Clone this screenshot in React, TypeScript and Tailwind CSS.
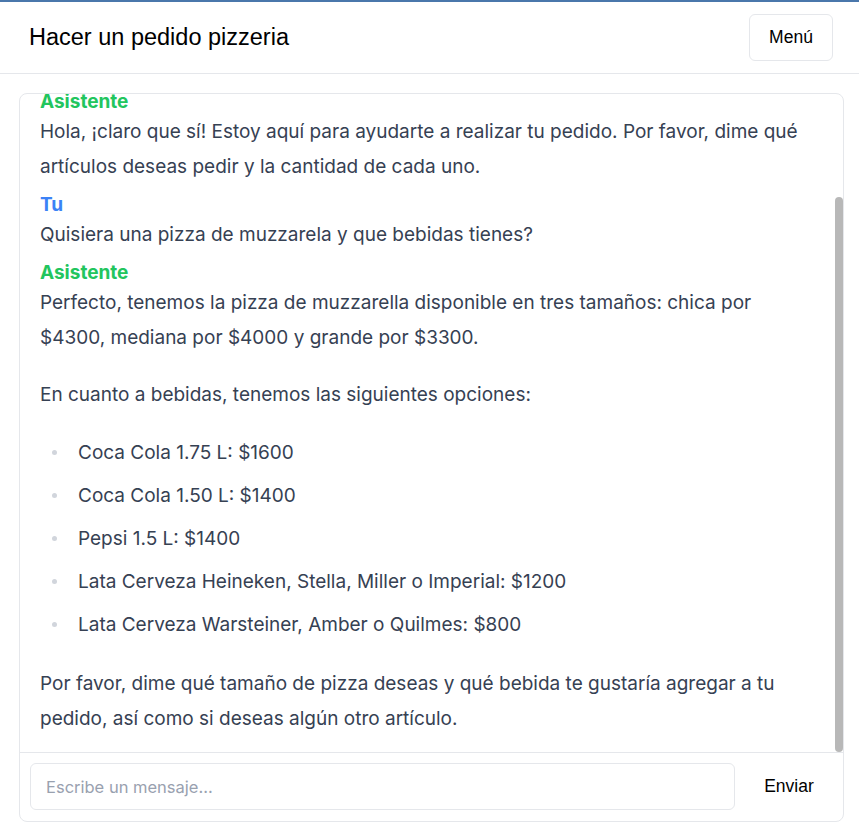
import { useEffect, useRef } from "react";

type Msg = { role: "assistant" | "user"; body: React.ReactNode };

const bebidas = [
  "Coca Cola 1.75 L: $1600",
  "Coca Cola 1.50 L: $1400",
  "Pepsi 1.5 L: $1400",
  "Lata Cerveza Heineken, Stella, Miller o Imperial: $1200",
  "Lata Cerveza Warsteiner, Amber o Quilmes: $800",
];

const messages: Msg[] = [
  { role: "user", body: <p>Hola, quiero hacer un pedido</p> },
  {
    role: "assistant",
    body: (
      <p>
        Hola, ¡claro que sí! Estoy aquí para ayudarte a realizar tu pedido. Por favor, dime qué artículos deseas pedir y la cantidad de cada uno.
      </p>
    ),
  },
  { role: "user", body: <p>Quisiera una pizza de muzzarela y que bebidas tienes?</p> },
  {
    role: "assistant",
    body: (
      <>
        <p>
          Perfecto, tenemos la pizza de muzzarella disponible en tres tamaños: chica por $4300, mediana por $4000 y grande por $3300.
        </p>
        <p className="mt-[22px]">En cuanto a bebidas, tenemos las siguientes opciones:</p>
        <ul className="mt-[23px] flex flex-col gap-2">
          {bebidas.map((b) => (
            <li key={b} className="flex items-center">
              <span className="ml-[12px] mr-[21px] h-[5px] w-[5px] rounded-full bg-gray-300" />
              <span>{b}</span>
            </li>
          ))}
        </ul>
        <p className="mt-[24px]">
          Por favor, dime qué tamaño de pizza deseas y qué bebida te gustaría agregar a tu pedido, así como si deseas algún otro artículo.
        </p>
      </>
    ),
  },
];

export default function App() {
  const scrollRef = useRef<HTMLDivElement>(null);

  useEffect(() => {
    const el = scrollRef.current;
    if (el) el.scrollTop = el.scrollHeight;
  }, []);

  return (
    <div className="flex h-[838px] flex-col bg-white font-['Inter',sans-serif]">
      <div className="h-[2px] bg-[#4a77ab]" />
      <header className="flex h-[72px] shrink-0 items-center justify-between border-b border-[#e5e7eb] pl-[29px] pr-[26px]">
        <h1 className="pt-[1px] font-['Liberation_Sans',Arial,sans-serif] text-[23.5px] text-black">Hacer un pedido pizzeria</h1>
        <button className="h-[47px] w-[84px] rounded-md border border-[#e5e7eb] font-['Liberation_Sans',Arial,sans-serif] text-[17.5px] text-black">
          Menú
        </button>
      </header>

      <div className="mb-[16px] ml-[19px] mr-[15px] mt-[19px] flex min-h-0 flex-1 flex-col overflow-hidden rounded-lg border border-[#e5e7eb]">
        <div className="relative min-h-0 flex-1">
          <div ref={scrollRef} className="h-full overflow-y-auto pb-[16px] pl-5 pr-[28px] pt-[48px]">
            <div className="flex flex-col gap-2">
              {messages.map((m, i) => (
                <div key={i}>
                  <div
                    className={`text-[19px] font-bold leading-[25px] ${m.role === "assistant" ? "text-[#22c55e]" : "text-[#3b82f6]"}`}
                  >
                    {m.role === "assistant" ? "Asistente" : "Tu"}
                  </div>
                  <div className="text-[19px] leading-[35px] text-gray-700">{m.body}</div>
                </div>
              ))}
            </div>
          </div>
          {/* barra de scroll */}
          <div className="absolute right-0 top-[103px] h-[555px] w-[8px] rounded-[4px] bg-[#b8b8b8]" />
        </div>

        <div className="flex shrink-0 items-center gap-[10px] border-t border-[#e5e7eb] pb-[11px] pl-[10px] pr-[10px] pt-[10px]">
          <input
            type="text"
            placeholder="Escribe un mensaje..."
            className="h-[47px] flex-1 rounded-md border border-[#e5e7eb] px-[15px] text-[16.5px] text-gray-700 placeholder:text-gray-400 focus:outline-none"
          />
          <button className="h-[47px] w-[88px] font-['Liberation_Sans',Arial,sans-serif] text-[17.5px] text-black">Enviar</button>
        </div>
      </div>
    </div>
  );
}
